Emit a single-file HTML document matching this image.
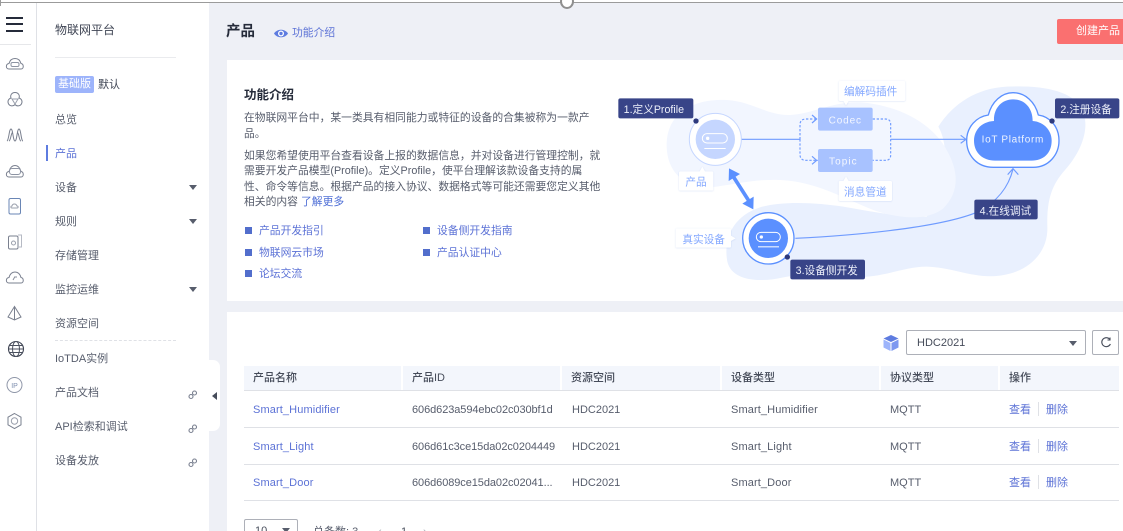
<!DOCTYPE html>
<html lang="zh"><head><meta charset="utf-8"><style>
*{box-sizing:border-box}
html{margin:0;padding:0;width:1123px;height:531px;overflow:hidden}
body{margin:0;padding:0;width:1123px;height:531px;overflow:hidden;position:relative;background:#eef0f6;font-family:"Liberation Sans","Noto Sans CJK SC",sans-serif;font-size:11px;color:#575d6c}
.a{position:absolute;white-space:nowrap}
.n{left:55px;font-size:11px;line-height:16px;color:#575d6c}
.c{width:0;height:0;border-left:4px solid transparent;border-right:4px solid transparent;border-top:5px solid #575d6c}
.lk{color:#5c72d6}
.sq{width:7px;height:7px;background:#526ecc}
.hd{top:366px;height:24px;background:#f3f6fc;line-height:25px;font-size:11px;font-weight:500;color:#464c5a}
.line{left:244px;width:875px;height:1px;background:#dfe1e6}
.cell{line-height:16px;font-size:11px}
.nm{letter-spacing:.12px}
svg{position:absolute;overflow:visible}
</style></head><body>
<div class="a" style="left:0;top:0;width:1123px;height:2px;background:#fff"></div>
<div class="a" style="left:0;top:2px;width:36px;height:529px;background:#fff"></div>
<div class="a" style="left:36px;top:2px;width:1px;height:529px;background:#dfe1e6"></div>
<div class="a" style="left:37px;top:2px;width:172px;height:529px;background:#fff"></div>
<div class="a" style="left:0;top:44px;width:31px;height:1px;background:#e6e7ea"></div>

<!-- hamburger -->
<div class="a" style="left:6px;top:17px;width:17px;height:2px;background:#252b3a"></div>
<div class="a" style="left:6px;top:23px;width:17px;height:2px;background:#252b3a"></div>
<div class="a" style="left:6px;top:30px;width:17px;height:2px;background:#252b3a"></div>

<!-- rail icons -->
<svg style="left:0;top:0" width="36" height="531" fill="none" stroke="#7a808f" stroke-width="1">
<path d="M9 69c-3.500 0-3.500-5 0-5.500 1-3.500 3-5 6-5s5 1.500 6 5c3 .5 3 5.500 0 5.500z"/><rect x="11" y="62.500" width="8" height="4" rx="1.500" stroke="#8d94a3"/>
<path d="M15 92.500a4 4 0 0 1 4 5.500 4 4 0 1 1-4 6.500 4 4 0 1 1-4-6.500 4 4 0 0 1 4-5.500z"/><path d="M12 99h6l-3 5z" stroke="#9a9fac"/>
<path d="M7 141c2-1 2-12 4-12s2 12 4 12 2-12 4-12 2 12 4 12M9 141c2-1 2-9 4-9M17 132c2 0 2 9 4 9" stroke="#7a808f"/>
<path d="M9 177c-3.500 0-3.500-5 0-5.500 1-3.500 3-6 6-6s5 2.500 6 6c3 .5 3 5.500 0 5.500z"/><rect x="9.500" y="168.500" width="11" height="6" rx="2.500" stroke="#8d94a3"/>
<rect x="9" y="198.500" width="11.500" height="15.500" rx="1.500" stroke="#6a86b5"/><path d="M12 208c-1.500 0-1.500-2 0-2 .3-1.500 1.500-2 2.500-2s2 .7 2.500 2c1.500 0 1.500 2 0 2z" stroke="#9aa0ac"/>
<rect x="8.500" y="236" width="9.500" height="13" rx="1.500"/><path d="M18 235h3.500v12H18" stroke="#b6bac4"/><circle cx="13.500" cy="243" r="2" stroke="#9aa0ac"/>
<path d="M9 283c-3.500 0-3.500-5 0-5.500 1-3.500 3-5.500 6-5.500s5 2 6 5.500c3 .5 3 5.500 0 5.500z"/><path d="M13 280l2-3.500M15 277h2" stroke="#8a8f9c"/>
<path d="M14.500 306.500L8 317l6.500 3 6.500-3zM14.500 306.500v13.500" stroke="#7a808f"/>
<circle cx="16" cy="349" r="7.500" stroke="#3d4352" stroke-width="1.100"/><ellipse cx="16" cy="349" rx="3.500" ry="7.500" stroke="#4c5260"/><path d="M8.500 349h15M9.500 345.500h13M9.500 352.500h13" stroke="#4c5260"/>
<circle cx="14.500" cy="385" r="7.500" stroke="#8f96a8"/><text x="14.500" y="388" font-size="7" text-anchor="middle" fill="#7f8faf" stroke="none" font-family="Liberation Sans">IP</text>
<path d="M14.500 413.500l6.500 3.700v7.600l-6.500 3.700-6.500-3.700v-7.600z" stroke="#7a808f"/><circle cx="14.500" cy="421" r="3.200" stroke="#9a9fac"/>
</svg>

<!-- sidebar -->
<div class="a" style="left:55px;top:21px;font-size:12px;line-height:18px;color:#3f4554">物联网平台</div>
<div class="a" style="left:55px;top:57px;width:121px;height:1px;background:#eaebee"></div>
<div class="a" style="left:55px;top:76px;width:39px;height:17px;border-radius:2px;background:#9db4fb;color:#fff;text-align:center;line-height:17px;font-size:11px">基础版</div>
<div class="a" style="left:98px;top:77px;line-height:16px;color:#3f4554">默认</div>
<div class="a n" style="top:112px">总览</div>
<div class="a" style="left:46px;top:145px;width:2px;height:16px;background:#5e7ce0"></div>
<div class="a n lk" style="top:146px">产品</div>
<div class="a n" style="top:180px">设备</div>
<div class="a n" style="top:214px">规则</div>
<div class="a n" style="top:248px">存储管理</div>
<div class="a n" style="top:282px">监控运维</div>
<div class="a n" style="top:316px">资源空间</div>
<div class="a" style="left:55px;top:340px;width:121px;border-top:1px dashed #dfe1e6"></div>
<div class="a n" style="top:351px">IoTDA实例</div>
<div class="a n" style="top:385px">产品文档</div>
<div class="a n" style="top:419px">API检索和调试</div>
<div class="a n" style="top:453px">设备发放</div>
<div class="a c" style="left:189px;top:185px"></div>
<div class="a c" style="left:189px;top:219px"></div>
<div class="a c" style="left:189px;top:287px"></div>
<svg style="left:0;top:0" width="209" height="531" fill="none" stroke="#7a8090" stroke-width="1.100">
<circle cx="191" cy="396.500" r="2"/><circle cx="194.500" cy="393" r="2"/>
<circle cx="191" cy="430.500" r="2"/><circle cx="194.500" cy="427" r="2"/>
<circle cx="191" cy="464.500" r="2"/><circle cx="194.500" cy="461" r="2"/>
</svg>
<div class="a" style="left:209px;top:360px;width:11px;height:71px;background:#fff;border-radius:0 7px 7px 0"></div>
<div class="a" style="left:212px;top:392px;width:0;height:0;border-top:4px solid transparent;border-bottom:4px solid transparent;border-right:5px solid #464c5a"></div>

<!-- top line and handle -->
<div class="a" style="left:0;top:2px;width:1123px;height:1px;background:#9b9b9b"></div>
<div class="a" style="left:0;top:0;width:1px;height:6px;background:#9b9b9b"></div>
<div class="a" style="left:560px;top:-6px;width:14px;height:15px;border-radius:50%;border:2.500px solid #8f8f8f;background:#fff"></div>

<!-- header -->
<div class="a" style="left:226px;top:22px;font-size:14.500px;line-height:20px;font-weight:700;color:#252b3a">产品</div>
<svg style="left:274px;top:28px" width="14" height="11"><path d="M0 5.500C3 .5 11 .5 14 5.500 11 10.500 3 10.500 0 5.500z" fill="#5e7ce0"/><circle cx="7" cy="5.500" r="3" fill="#fff"/><circle cx="7" cy="5.500" r="1.700" fill="#5e7ce0"/></svg>
<div class="a lk" style="left:292px;top:25px;line-height:16px;font-size:10.800px">功能介绍</div>
<div class="a" style="left:1057px;top:19px;width:66px;height:25px;background:#fa7070;border-radius:2px 0 0 2px;color:#fff;line-height:25px;padding-left:19px;font-size:11px">创建产品</div>

<!-- card 1 -->
<div class="a" style="left:227px;top:60px;width:896px;height:241px;background:#fff"></div>
<div class="a" style="left:244px;top:86px;font-size:12.500px;line-height:18px;font-weight:700;color:#252b3a">功能介绍</div>
<div class="a" style="left:244px;top:110px;line-height:16px;font-size:10.800px;color:#575d6c">在物联网平台中，某一类具有相同能力或特征的设备的合集被称为一款产<br>品。</div>
<div class="a" style="left:244px;top:149px;line-height:15.300px;font-size:10.800px;color:#575d6c">如果您希望使用平台查看设备上报的数据信息，并对设备进行管理控制，就<br>需要开发产品模型(Profile)。定义Profile，使平台理解该款设备支持的属<br>性、命令等信息。根据产品的接入协议、数据格式等可能还需要您定义其他<br>相关的内容 <span style="color:#4f6fd6">了解更多</span></div>
<div class="a sq" style="left:245px;top:227px"></div><div class="a lk" style="left:259px;top:223px;line-height:16px;font-size:10.800px">产品开发指引</div>
<div class="a sq" style="left:245px;top:249px"></div><div class="a lk" style="left:259px;top:245px;line-height:16px;font-size:10.800px">物联网云市场</div>
<div class="a sq" style="left:245px;top:270px"></div><div class="a lk" style="left:259px;top:266px;line-height:16px;font-size:10.800px">论坛交流</div>
<div class="a sq" style="left:423px;top:227px"></div><div class="a lk" style="left:437px;top:223px;line-height:16px;font-size:10.800px">设备侧开发指南</div>
<div class="a sq" style="left:423px;top:249px"></div><div class="a lk" style="left:437px;top:245px;line-height:16px;font-size:10.800px">产品认证中心</div>

<!-- diagram -->
<svg style="left:610px;top:70px" width="513" height="225" viewBox="0 0 1539 675" font-family="Liberation Sans,Noto Sans CJK SC,sans-serif">
<path d="M985 170C1030 100 1100 55 1190 50C1290 45 1385 60 1415 115C1445 175 1410 250 1365 300C1325 345 1310 390 1312 470C1315 545 1260 605 1170 617C1090 627 1030 592 950 590C880 590 830 622 730 622C640 622 590 608 520 622C440 640 365 630 352 575C340 510 365 440 450 412C520 392 620 398 700 410C760 420 850 440 950 440C1010 340 1020 230 985 170Z" fill="#e9f0fe"/>
<path d="M170 220C172 130 250 85 350 90C430 95 470 137 540 135C620 130 680 85 780 100C880 115 970 165 1010 240C1050 310 1045 370 1000 415C950 455 860 445 790 420C700 385 620 335 510 330C440 327 390 340 320 350C240 360 168 320 170 220Z" fill="#f2f6ff"/>
<g fill="none" stroke="#6f9bff" stroke-width="3.500">
<path d="M392 208H570"/>
<path d="M570 208V165q0-18 18-18h36M570 208v45q0 18 18 18h36" stroke-dasharray="7 5"/>
<path d="M606 135l14 12-14 12M606 259l14 12-14 12"/>
<path d="M788 147h38q16 0 16 16v92q0 16-16 16h-38" stroke-dasharray="7 5"/>
<path d="M842 208H1068M1052 196l16 12-16 12"/>
<path d="M556 505C760 495 1000 470 1105 425c55-30 90-70 104-128M1193 314l16-18 16 18"/>
</g>
<!-- double arrow -->
<path d="M370 320L418 395" stroke="#5b90ff" stroke-width="11" fill="none"/>
<path d="M357 295L390 312 356 333ZM430 418L431 380 397 401Z" fill="#5b90ff"/>
<!-- cloud -->
<path d="M1150 292C1100 292 1070 255 1070 212C1070 170 1100 140 1135 135C1145 95 1175 68 1209 68C1245 68 1275 95 1285 135C1320 140 1347 170 1347 212C1347 255 1315 292 1270 292Z" fill="#fff" stroke="#5b90ff" stroke-width="4" stroke-linejoin="round"/>
<path d="M1155 272C1120 272 1092 250 1092 212C1092 180 1115 155 1152 153C1150 115 1175 88 1209 88C1245 88 1268 115 1268 153C1300 155 1325 180 1325 212C1325 250 1300 272 1265 272Z" fill="#5b90ff"/>
<text x="1115" y="217" font-size="30" fill="#eef4ff" textLength="185">IoT Platform</text>
<!-- product circle -->
<circle cx="316" cy="208" r="78" fill="#fff" stroke="#c5d6ff" stroke-width="3"/>
<circle cx="316" cy="208" r="59" fill="#c5d6ff"/>
<rect x="277" y="191" width="75" height="28" rx="14" fill="none" stroke="#fff" stroke-width="3"/><circle cx="293" cy="205" r="5" fill="#fff"/><rect x="283" y="234" width="64" height="3" fill="#fff"/>
<circle cx="258" cy="153" r="8" fill="#2e3a7d"/>
<!-- device circle -->
<circle cx="475" cy="505" r="77" fill="#fff" stroke="#5b90ff" stroke-width="4"/>
<circle cx="475" cy="505" r="59" fill="#5b90ff"/>
<rect x="439" y="487" width="72" height="28" rx="14" fill="none" stroke="#fff" stroke-width="3"/><circle cx="454" cy="501" r="5" fill="#fff"/><rect x="444" y="529" width="63" height="3" fill="#fff"/>
<circle cx="532" cy="561" r="8" fill="#2e3a7d"/>
<circle cx="1326" cy="153" r="8" fill="#2e3a7d"/>
<!-- codec / topic -->
<rect x="624" y="113" width="164" height="69" rx="6" fill="#a8c2ff"/><text x="656" y="160" font-size="30" fill="#f4f7ff" textLength="97">Codec</text>
<rect x="624" y="237" width="164" height="69" rx="6" fill="#a8c2ff"/><text x="657" y="284" font-size="30" fill="#f4f7ff" textLength="83">Topic</text>
<!-- white labels -->
<g fill="#fff" style="filter:drop-shadow(0 1px 2px rgba(90,130,220,.25))">
<path d="M690 33h192a4 4 0 0 1 4 4v52a4 4 0 0 1-4 4H716l-8 14-8-14h-10a4 4 0 0 1-4-4V37a4 4 0 0 1 4-4z"/>
<path d="M690 333h10l8-14 8 14h126a4 4 0 0 1 4 4v52a4 4 0 0 1-4 4H690a4 4 0 0 1-4-4v-52a4 4 0 0 1 4-4z"/>
<path d="M211 304h58l8-14 8 14h21a4 4 0 0 1 4 4v50a4 4 0 0 1-4 4H211a4 4 0 0 1-4-4v-50a4 4 0 0 1 4-4z"/>
<path d="M201 475h158a4 4 0 0 1 4 4v18l14 8-14 8v16a4 4 0 0 1-4 4H201a4 4 0 0 1-4-4v-50a4 4 0 0 1 4-4z"/>
</g>
<g font-size="32" fill="#84a8ff">
<text x="702" y="75">编解码插件</text>
<text x="702" y="376">消息管道</text>
<text x="226" y="347">产品</text>
<text x="217" y="519">真实设备</text>
</g>
<!-- dark labels -->
<g fill="#384488">
<rect x="25" y="85" width="225" height="60" rx="6"/>
<rect x="1335" y="85" width="193" height="60" rx="6"/>
<rect x="541" y="569" width="224" height="59" rx="6"/>
<rect x="1093" y="389" width="190" height="59" rx="6"/>
</g>
<g font-size="32" fill="#eef1fb">
<text x="41" y="129" textLength="181">1.定义Profile</text>
<text x="1351" y="129">2.注册设备</text>
<text x="557" y="612">3.设备侧开发</text>
<text x="1109" y="433">4.在线调试</text>
</g>
</svg>

<!-- card 2 -->
<div class="a" style="left:227px;top:312px;width:896px;height:219px;background:#fff"></div>
<svg style="left:883px;top:335px" width="16" height="16"><path d="M8 0l7.500 3.500L8 7 .5 3.500z" fill="#5e7ce0"/><path d="M.5 4.500L7.500 8v8L.5 12.500z" fill="#9db4fb"/><path d="M15.500 4.500L8.500 8v8l7-3.500z" fill="#7d98f0"/></svg>
<div class="a" style="left:906px;top:330px;width:180px;height:25px;border:1px solid #adb0b8;border-radius:2px;background:#fff;line-height:25px;padding-left:10px;font-size:11px;color:#464c5a">HDC2021</div>
<div class="a c" style="left:1069px;top:341px;border-top-color:#575d6c"></div>
<div class="a" style="left:1092px;top:330px;width:27px;height:25px;border:1px solid #adb0b8;border-radius:2px;background:#fff"></div>
<svg style="left:1100px;top:337px" width="12" height="11" fill="none" stroke="#464c5a" stroke-width="1.100"><path d="M9.700 2.200A4.500 4.500 0 1 0 10.400 7"/><path d="M10 .5v2.500H7.500"/></svg>

<div class="a hd" style="left:244px;width:157px;padding-left:9px">产品名称</div>
<div class="a hd" style="left:403px;width:157px;padding-left:9px">产品ID</div>
<div class="a hd" style="left:562px;width:158px;padding-left:9px">资源空间</div>
<div class="a hd" style="left:722px;width:157px;padding-left:9px">设备类型</div>
<div class="a hd" style="left:881px;width:117px;padding-left:9px">协议类型</div>
<div class="a hd" style="left:1000px;width:119px;padding-left:9px">操作</div>
<div class="a line" style="top:390px"></div>
<div class="a line" style="top:427px"></div>
<div class="a line" style="top:464px"></div>
<div class="a line" style="top:500px"></div>

<div class="a cell lk nm" style="left:253px;top:402px">Smart_Humidifier</div>
<div class="a cell" style="left:412px;top:402px;letter-spacing:-.08px">606d623a594ebc02c030bf1d</div>
<div class="a cell" style="left:572px;top:402px">HDC2021</div>
<div class="a cell nm" style="left:731px;top:402px">Smart_Humidifier</div>
<div class="a cell" style="left:890px;top:402px">MQTT</div>
<div class="a cell lk" style="left:1009px;top:402px">查看</div>
<div class="a" style="left:1038px;top:402px;width:1px;height:14px;background:#dfe1e6"></div>
<div class="a cell lk" style="left:1046px;top:402px">删除</div>

<div class="a cell lk nm" style="left:253px;top:439px">Smart_Light</div>
<div class="a cell" style="left:412px;top:439px;letter-spacing:-.08px">606d61c3ce15da02c0204449</div>
<div class="a cell" style="left:572px;top:439px">HDC2021</div>
<div class="a cell nm" style="left:731px;top:439px">Smart_Light</div>
<div class="a cell" style="left:890px;top:439px">MQTT</div>
<div class="a cell lk" style="left:1009px;top:439px">查看</div>
<div class="a" style="left:1038px;top:439px;width:1px;height:14px;background:#dfe1e6"></div>
<div class="a cell lk" style="left:1046px;top:439px">删除</div>

<div class="a cell lk nm" style="left:253px;top:475px">Smart_Door</div>
<div class="a cell" style="left:412px;top:475px;letter-spacing:-.08px">606d6089ce15da02c02041...</div>
<div class="a cell" style="left:572px;top:475px">HDC2021</div>
<div class="a cell nm" style="left:731px;top:475px">Smart_Door</div>
<div class="a cell" style="left:890px;top:475px">MQTT</div>
<div class="a cell lk" style="left:1009px;top:475px">查看</div>
<div class="a" style="left:1038px;top:475px;width:1px;height:14px;background:#dfe1e6"></div>
<div class="a cell lk" style="left:1046px;top:475px">删除</div>

<!-- pagination, clipped at the bottom edge -->
<div class="a" style="left:244px;top:519px;width:54px;height:25px;border:1px solid #adb0b8;border-radius:2px;background:#fff;line-height:23px;padding-left:10px;color:#464c5a">10</div>
<div class="a c" style="left:282px;top:528px"></div>
<div class="a" style="left:313px;top:524px;line-height:16px;color:#575d6c">总条数: 3</div>
<div class="a" style="left:378px;top:524px;line-height:16px;color:#adb0b8">‹</div>
<div class="a" style="left:401px;top:524px;line-height:16px;color:#464c5a">1</div>
<div class="a" style="left:423px;top:524px;line-height:16px;color:#adb0b8">›</div>
</body></html>
